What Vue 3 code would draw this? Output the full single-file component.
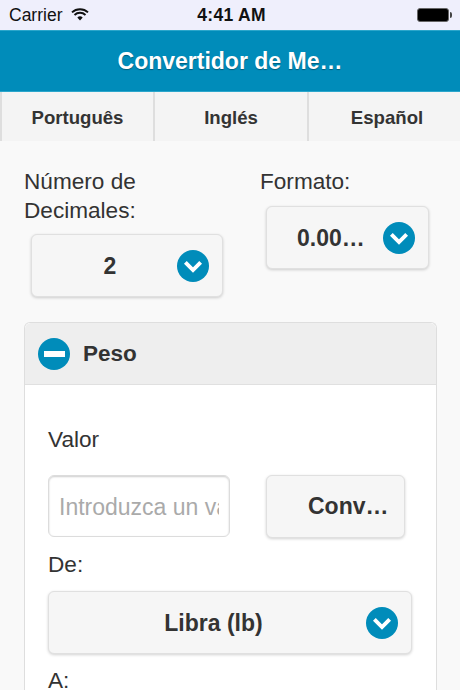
<script setup>
const tabs = ['Português', 'Inglés', 'Español']
</script>

<template>
  <div class="page">
    <div class="status">
      <div class="status-left">
        <span>Carrier</span>
        <svg class="wifi" viewBox="0 0 18 13" width="18" height="13">
          <path d="M9 12.6 6.3 9.6a3.9 3.9 0 0 1 5.4 0z" fill="#111" />
          <path d="M1 4.4a11.6 11.6 0 0 1 16 0M3.5 7a8 8 0 0 1 11 0" fill="none" stroke="#111" stroke-width="1.9" />
        </svg>
      </div>
      <span class="time">4:41 AM</span>
      <div class="battery"><i></i></div>
    </div>

    <header class="bar">Convertidor de Me…</header>

    <nav class="tabs">
      <div v-for="t in tabs" :key="t" class="tab">{{ t }}</div>
    </nav>

    <main class="content">
      <div class="options">
        <div class="opt">
          <label>Número de<br />Decimales:</label>
          <div class="select sel-dec">
            <span class="sel-text">2</span>
            <span class="round"><svg viewBox="0 0 16 16"><path d="M3.3 5.8 8 10.5 12.7 5.8" /></svg></span>
          </div>
        </div>
        <div class="opt">
          <label>Formato:</label>
          <div class="select sel-fmt">
            <span class="sel-text">0.00…</span>
            <span class="round"><svg viewBox="0 0 16 16"><path d="M3.3 5.8 8 10.5 12.7 5.8" /></svg></span>
          </div>
        </div>
      </div>

      <section class="panel">
        <div class="panel-head">
          <span class="round minus"><i></i></span>
          <span>Peso</span>
        </div>
        <div class="panel-body">
          <label class="valor">Valor</label>
          <div class="value-row">
            <div class="input-box"><input type="text" placeholder="Introduzca un valor" /></div>
            <div class="btn">Conv…</div>
          </div>
          <label class="de">De:</label>
          <div class="select sel-full">
            <span class="sel-text">Libra (lb)</span>
            <span class="round"><svg viewBox="0 0 16 16"><path d="M3.3 5.8 8 10.5 12.7 5.8" /></svg></span>
          </div>
          <label class="a">A:</label>
        </div>
      </section>
    </main>
  </div>
</template>

<style>
html,
body {
  margin: 0;
  background: #f9f9f9;
}
</style>

<style scoped>
.page {
  width: 460px;
  height: 690px;
  overflow: hidden;
  font-family: 'Liberation Sans', Arial, sans-serif;
  color: #333;
  background: #f9f9f9;
}
.status {
  height: 30px;
  box-sizing: border-box;
  padding: 0 11px 0 9px;
  display: grid;
  grid-template-columns: 1fr auto 1fr;
  align-items: center;
  background: #efeffc;
  color: #111;
  font-size: 17.5px;
}
.status-left {
  display: flex;
  align-items: center;
  gap: 9px;
}
.wifi {
  margin-top: -2px;
}
.time {
  font-weight: 700;
  font-size: 17.5px;
  letter-spacing: 0.3px;
  padding-left: 5px;
}
.battery {
  position: relative;
  justify-self: end;
  width: 32px;
  height: 14px;
  box-sizing: border-box;
  border-radius: 3px;
  background: #000;
  border: 1px solid #666;
}
.battery i {
  position: absolute;
  right: -4px;
  top: 3px;
  width: 2px;
  height: 6px;
  background: #444;
  border-radius: 0 2px 2px 0;
}
.bar {
  height: 62px;
  box-sizing: border-box;
  display: flex;
  align-items: center;
  justify-content: center;
  background: #008cba;
  border-top: 1px solid #2ba6cb;
  border-bottom: 1px solid #2ba6cb;
  color: #fff;
  font-size: 23px;
  font-weight: 700;
  text-shadow: 0 1px 1px rgba(0, 0, 0, 0.35);
}
.tabs {
  height: 49px;
  display: grid;
  grid-template-columns: 153px 154px 1fr;
}
.tab {
  display: flex;
  align-items: center;
  justify-content: center;
  background: #f4f4f4;
  border-left: 2px solid #dedede;
  font-size: 18.6px;
  font-weight: 700;
  padding-top: 3px;
  box-sizing: border-box;
}
.tab:last-child {
  padding-left: 5px;
}
.content {
  padding: 26px 24px 0;
}
.options {
  display: grid;
  grid-template-columns: 236px 1fr;
  align-items: start;
  height: 155px;
}
.opt label {
  display: block;
  font-size: 22.6px;
  line-height: 29px;
}
.select {
  display: flex;
  align-items: center;
  box-sizing: border-box;
  height: 63px;
  border: 1px solid #e0e0e0;
  border-radius: 6px;
  background: #f6f6f6;
  box-shadow: 0 1px 3px rgba(0, 0, 0, 0.18);
  font-size: 23px;
  font-weight: 700;
}
.sel-text {
  flex: 1;
  text-align: center;
  white-space: nowrap;
  padding-top: 2px;
}
.round {
  display: flex;
  align-items: center;
  justify-content: center;
  flex: none;
  width: 32px;
  height: 32px;
  border-radius: 50%;
  background: #008cba;
}
.round svg {
  width: 26px;
  height: 26px;
  fill: none;
  stroke: #fff;
  stroke-width: 2.4;
}
.sel-dec {
  width: 192px;
  margin: 9px 0 0 7px;
  padding: 0 13px 0 11px;
}
.sel-fmt {
  width: 163px;
  margin: 10px 0 0 6px;
  padding: 0 13px 0 30px;
}
.sel-fmt .sel-text {
  text-align: left;
}
.panel {
  width: 413px;
  box-sizing: border-box;
  border: 1px solid #dedede;
  border-bottom: 0;
  border-radius: 6px 6px 0 0;
  background: #fff;
}
.panel-head {
  height: 62px;
  box-sizing: border-box;
  display: flex;
  align-items: center;
  gap: 13px;
  padding-left: 13px;
  background: #eeeeee;
  border-bottom: 1px solid #e0e0e0;
  border-radius: 6px 6px 0 0;
  font-size: 22.5px;
  font-weight: 700;
}
.minus i {
  width: 21px;
  height: 6px;
  background: #fff;
}
.panel-body {
  padding: 0 23px;
}
.panel-body label {
  display: block;
  font-size: 22.6px;
  line-height: 28px;
}
.valor {
  padding-top: 41px;
}
.value-row {
  display: flex;
  margin-top: 21px;
}
.input-box {
  box-sizing: border-box;
  width: 182px;
  height: 62px;
  border: 1px solid #dcdcdc;
  border-radius: 6px;
  box-shadow: inset 0 1px 2px rgba(0, 0, 0, 0.2);
  background: #fff;
  padding: 2px 10px 0;
  display: flex;
  align-items: center;
}
.input-box input {
  width: 100%;
  border: 0;
  outline: 0;
  padding: 0;
  background: transparent;
  font-family: inherit;
  font-size: 23px;
}
.input-box input::placeholder {
  color: #aaa;
  opacity: 1;
}
.btn {
  box-sizing: border-box;
  width: 139px;
  height: 63px;
  margin-left: 36px;
  padding: 0 0 1px 41px;
  display: flex;
  align-items: center;
  border: 1px solid #e0e0e0;
  border-radius: 6px;
  background: #f6f6f6;
  box-shadow: 0 1px 3px rgba(0, 0, 0, 0.18);
  font-size: 23px;
  font-weight: 700;
  white-space: nowrap;
}
.de {
  margin-top: 13px;
}
.sel-full {
  width: 364px;
  margin-top: 12px;
  padding: 0 13px 0 12px;
}
.a {
  margin-top: 13px;
}
</style>
